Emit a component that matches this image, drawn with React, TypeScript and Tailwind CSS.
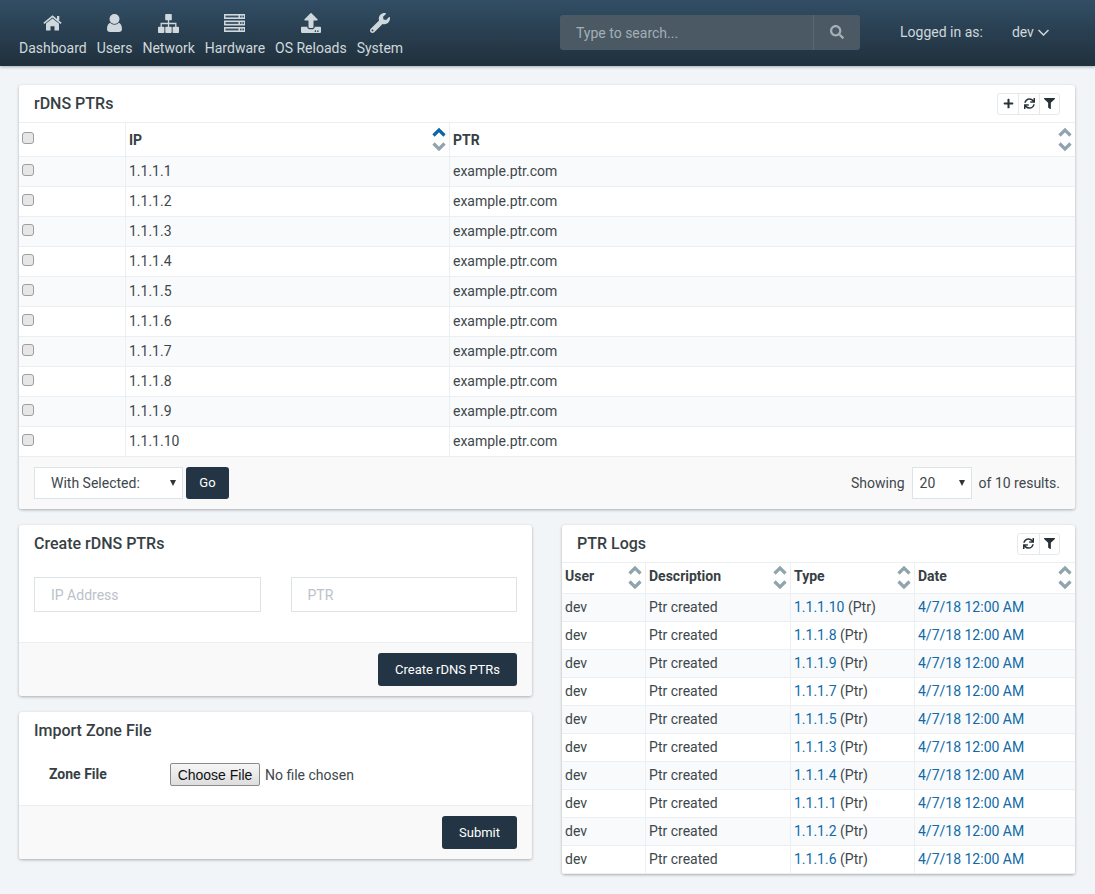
import React from "react";
import { FaUpload, FaWrench, FaSearch, FaPlus, FaSync, FaFilter } from "react-icons/fa";

function HomeIcon() {
  return (
    <svg width="19" height="16" viewBox="0 0 19 16" fill="#cfd8dc">
      <path d="M3 8.6 9.5 3.4 16 8.6V15a.6.6 0 0 1-.6.6h-3.9v-4.4h-4v4.4H3.6A.6.6 0 0 1 3 15Z" />
      <path d="M.9 8.3 9.5 1.3l8.6 7" fill="none" stroke="#cfd8dc" strokeWidth="1.7" />
      <rect x="14" y="1" width="2.3" height="4.4" />
    </svg>
  );
}
function UserIcon() {
  return (
    <svg width="15" height="18" viewBox="0 0 15 18" fill="#cfd8dc">
      <circle cx="7.5" cy="5" r="5" />
      <path d="M0 15C0 11.5 1.5 9.5 3.2 8.8 4.3 10 5.8 10.7 7.5 10.7 9.2 10.7 10.7 10 11.8 8.8 13.5 9.5 15 11.5 15 15 15 17 13.8 18 12 18H3C1.2 18 0 17 0 15Z" />
    </svg>
  );
}
function SitemapIcon() {
  return (
    <svg width="21" height="19" viewBox="0 0 21 19" fill="#cfd8dc">
      <rect x="7.2" y="0" width="6.6" height="6.2" rx="0.8" />
      <rect x="0" y="12.8" width="6.4" height="6.2" rx="0.8" />
      <rect x="7.3" y="12.8" width="6.4" height="6.2" rx="0.8" />
      <rect x="14.6" y="12.8" width="6.4" height="6.2" rx="0.8" />
      <path d="M10.5 6v7M3.2 13V9.5h14.6V13" fill="none" stroke="#cfd8dc" strokeWidth="1.3" />
    </svg>
  );
}
function ServerIcon() {
  return (
    <svg width="21" height="18" viewBox="0 0 21 18">
      {[0, 6.5, 13].map((y) => (
        <g key={y}>
          <rect x="0" y={y} width="21" height="5" fill="#cfd8dc" />
          <rect x="1.5" y={y + 1.6} width="13" height="1.8" fill="#3a5166" />
          <rect x="16" y={y + 1.6} width="1.6" height="1.8" fill="#3a5166" />
          <rect x="18.4" y={y + 1.6} width="1.6" height="1.8" fill="#3a5166" />
        </g>
      ))}
    </svg>
  );
}

const navItems = [
  { label: "Dashboard", icon: <HomeIcon /> },
  { label: "Users", icon: <UserIcon /> },
  { label: "Network", icon: <SitemapIcon /> },
  { label: "Hardware", icon: <ServerIcon /> },
  { label: "OS Reloads", icon: <FaUpload size={20} /> },
  { label: "System", icon: <FaWrench size={20} /> },
];

function Sort({ active, className }: { active?: boolean; className?: string }) {
  return (
    <svg width="16" height="25" viewBox="0 0 16 25" fill="none" strokeWidth="3.2" className={`shrink-0 ${className ?? ""}`}>
      <polyline points="2.5,8.5 8,3 13.5,8.5" stroke={active ? "#0d66a5" : "#90a4ae"} />
      <polyline points="2.5,16.5 8,22 13.5,16.5" stroke="#90a4ae" />
    </svg>
  );
}

function Check() {
  return <input type="checkbox" className="block appearance-none w-[12px] h-[12px] ml-[3px] mb-[3px] rounded-[3px] border border-[#9e9e9e] bg-[#e6e6e6]" />;
}

function Toolbar({ icons }: { icons: { Icon: React.ComponentType<{ size?: number }>; w: string }[] }) {
  return (
    <div className="flex h-[22px] rounded-[3px] border border-[#e6e9eb] bg-white">
      {icons.map(({ Icon, w }, i) => (
        <div key={i} className={`${w} flex items-center justify-center text-[#263238] ${i > 0 ? "border-l border-[#e6e9eb]" : ""}`}>
          <Icon size={11} />
        </div>
      ))}
    </div>
  );
}

function Th({ children, w, active, last, logs }: { children?: React.ReactNode; w?: string; active?: boolean; last?: boolean; logs?: boolean }) {
  return (
    <th className={`${w ?? ""} p-0 pl-[3px] text-left font-bold text-[#373f44] border-b border-[#eceff1] ${last ? "" : "border-r"}`}>
      <div className="flex items-center justify-between pr-[2px]">
        <span className={logs ? "mb-[4px]" : "mt-[2px]"}>{children}</span>
        <Sort active={active} className={logs ? "mb-[2px]" : ""} />
      </div>
    </th>
  );
}

function Select({ w, pl, children }: { w: string; pl: string; children: React.ReactNode }) {
  return (
    <div className={`relative ${w} h-[32px]`}>
      <select className={`appearance-none w-full h-full border border-[#dce4e6] bg-white ${pl} text-[14px]`}>{children}</select>
      <svg width="6" height="6" viewBox="0 0 6 6" className="absolute right-[7px] top-[13px] pointer-events-none"><polygon points="0,0 6,0 3,6" fill="#333" /></svg>
    </div>
  );
}

const primaryBtn = "h-[33px] rounded-[3px] bg-[#233544] text-white text-[13px] flex items-center justify-center";
const inputCls = "h-[35px] border border-[#dce4e6] bg-white pl-[16px] text-[14px] placeholder:text-[#bcc1ca] outline-none min-w-0";
const titleCls = "text-[16px] font-medium text-[#373f44]";

const ips = Array.from({ length: 10 }, (_, i) => `1.1.1.${i + 1}`);
const logs = ["1.1.1.10", "1.1.1.8", "1.1.1.9", "1.1.1.7", "1.1.1.5", "1.1.1.3", "1.1.1.4", "1.1.1.1", "1.1.1.2", "1.1.1.6"];

export default function App() {
  return (
    <div className="min-h-[894px] bg-[#f2f5f8] text-[14px] text-[#3e474c] font-['Roboto',sans-serif]">
      <header className="h-[66px] flex items-center bg-gradient-to-b from-[#324e65] to-[#20303c] shadow-[0_1px_3px_rgba(0,0,0,0.3)] pl-[19px]">
        <nav className="flex gap-[10px] w-[541px] mt-[3px]">
          {navItems.map(({ label, icon }) => (
            <div key={label} className="flex flex-col items-center text-[#cfd8dc]">
              <div className="h-[22px] mb-[5px] flex items-center justify-center">{icon}</div>
              <span className="leading-[18px]">{label}</span>
            </div>
          ))}
        </nav>
        <div className="flex h-[35px] w-[300px] rounded-[3px] bg-[#4a5964] mb-[2px]">
          <div className="flex-1 flex items-center pl-[16px] pt-[2px] text-[#a4afb6] border-r border-[#5a6872]">Type to search...</div>
          <div className="w-[46px] flex items-center justify-center text-[#a4afb6]"><FaSearch size={14} /></div>
        </div>
        <span className="ml-[40px] text-[#cfd8dc] mb-[2px]">Logged in as:</span>
        <span className="ml-[29px] text-[#cfd8dc] mb-[2px] flex items-center gap-[4px]">dev
          <svg width="11" height="7" viewBox="0 0 11 7" fill="none" stroke="#cfd8dc" strokeWidth="1.5"><polyline points="0.5,1 5.5,6 10.5,1" /></svg>
        </span>
      </header>

      <main className="pt-[19px] pl-[19px] pr-[20px]">
        <section className="bg-white rounded-[3px] shadow-[0_1px_3px_rgba(0,0,0,0.3)] overflow-hidden">
          <div className="h-[38px] border-b border-[#eceff1] flex items-center justify-between pl-[15px] pr-[15px]">
            <h2 className={titleCls}>rDNS PTRs</h2>
            <Toolbar icons={[{ Icon: FaPlus, w: "w-[20px]" }, { Icon: FaSync, w: "w-[21px]" }, { Icon: FaFilter, w: "w-[20px]" }]} />
          </div>
          <table className="w-full table-fixed border-separate border-spacing-0">
            <thead>
              <tr className="h-[34px]">
                <th className="w-[107px] p-0 border-b border-r border-[#eceff1]"><Check /></th>
                <Th w="w-[324px]" active>IP</Th>
                <Th last>PTR</Th>
              </tr>
            </thead>
            <tbody>
              {ips.map((ip, i) => (
                <tr key={ip} className={`h-[30px] ${i % 2 === 0 ? "bg-[#f9fafb]" : "bg-white"}`}>
                  <td className="p-0 border-b border-r border-[#eceff1]"><Check /></td>
                  <td className="p-0 pl-[3px] border-b border-r border-[#eceff1]">{ip}</td>
                  <td className="p-0 pl-[3px] border-b border-[#eceff1]">example.ptr.com</td>
                </tr>
              ))}
            </tbody>
          </table>
          <div className="h-[52px] bg-[#f9f9f9] flex items-center justify-between pl-[15px] pr-[15px]">
            <div className="flex gap-[3px]">
              <Select w="w-[149px]" pl="pl-[16px]"><option>With Selected:</option></Select>
              <button className={`${primaryBtn} w-[43px] !h-[32px]`}>Go</button>
            </div>
            <div className="flex items-center gap-[7px]">
              <span>Showing</span>
              <Select w="w-[60px]" pl="pl-[7px]"><option>20</option></Select>
              <span>of 10 results.</span>
            </div>
          </div>
        </section>

        <div className="flex gap-[30px] mt-[16px] items-start">
          <div className="w-[513px] flex flex-col gap-[16px]">
            <section className="bg-white rounded-[3px] shadow-[0_1px_3px_rgba(0,0,0,0.3)] overflow-hidden">
              <div className="h-[38px] flex items-center pl-[15px]"><h2 className={titleCls}>Create rDNS PTRs</h2></div>
              <div className="flex gap-[30px] px-[15px] pt-[14px] pb-[30px]">
                <input placeholder="IP Address" className={`${inputCls} flex-1`} />
                <input placeholder="PTR" className={`${inputCls} flex-1`} />
              </div>
              <div className="h-[54px] bg-[#f9f9f9] border-t border-[#eceff1] flex items-center justify-end pr-[15px]">
                <button className={`${primaryBtn} w-[139px]`}>Create rDNS PTRs</button>
              </div>
            </section>
            <section className="bg-white rounded-[3px] shadow-[0_1px_3px_rgba(0,0,0,0.3)] overflow-hidden">
              <div className="h-[38px] flex items-center pl-[15px]"><h2 className={titleCls}>Import Zone File</h2></div>
              <div className="h-[55px] flex items-start pl-[30px] pt-[13px]">
                <label className="w-[121px] mt-[3px] font-bold leading-[16px] text-[#373f44]">Zone File</label>
                <input type="file" className="text-[14px] text-[#3e474c] leading-[23px] file:h-[23px] file:w-[90px] file:mr-[5px] file:border file:border-[#8a8a8a] file:rounded-[2px] file:bg-[linear-gradient(#f6f6f6,#dddddd)] file:text-[#111] file:font-['Liberation_Sans'] file:text-[14px]" />
              </div>
              <div className="h-[54px] bg-[#f9f9f9] border-t border-[#eceff1] flex items-center justify-end pr-[15px]">
                <button className={`${primaryBtn} w-[75px]`}>Submit</button>
              </div>
            </section>
          </div>

          <section className="w-[513px] bg-white rounded-[3px] shadow-[0_1px_3px_rgba(0,0,0,0.3)] overflow-hidden">
            <div className="h-[38px] border-b border-[#eceff1] flex items-center justify-between pl-[15px] pr-[15px]">
              <h2 className={titleCls}>PTR Logs</h2>
              <Toolbar icons={[{ Icon: FaSync, w: "w-[21px]" }, { Icon: FaFilter, w: "w-[20px]" }]} />
            </div>
            <table className="w-full table-fixed border-separate border-spacing-0">
              <thead>
                <tr className="h-[31px]">
                  <Th w="w-[84px]" logs>User</Th>
                  <Th w="w-[145px]" logs>Description</Th>
                  <Th w="w-[124px]" logs>Type</Th>
                  <Th last logs>Date</Th>
                </tr>
              </thead>
              <tbody>
                {logs.map((ip, i) => (
                  <tr key={ip} className={`h-[28px] ${i % 2 === 0 ? "bg-[#f9fafb]" : "bg-white"}`}>
                    <td className="p-0 pl-[3px] border-b border-r border-[#eceff1]">dev</td>
                    <td className="p-0 pl-[3px] border-b border-r border-[#eceff1]">Ptr created</td>
                    <td className="p-0 pl-[3px] border-b border-r border-[#eceff1]"><a className="text-[#0f6aa8]">{ip}</a> (Ptr)</td>
                    <td className="p-0 pl-[3px] border-b border-[#eceff1] text-[#0f6aa8]">4/7/18 12:00 AM</td>
                  </tr>
                ))}
              </tbody>
            </table>
          </section>
        </div>
      </main>
    </div>
  );
}
